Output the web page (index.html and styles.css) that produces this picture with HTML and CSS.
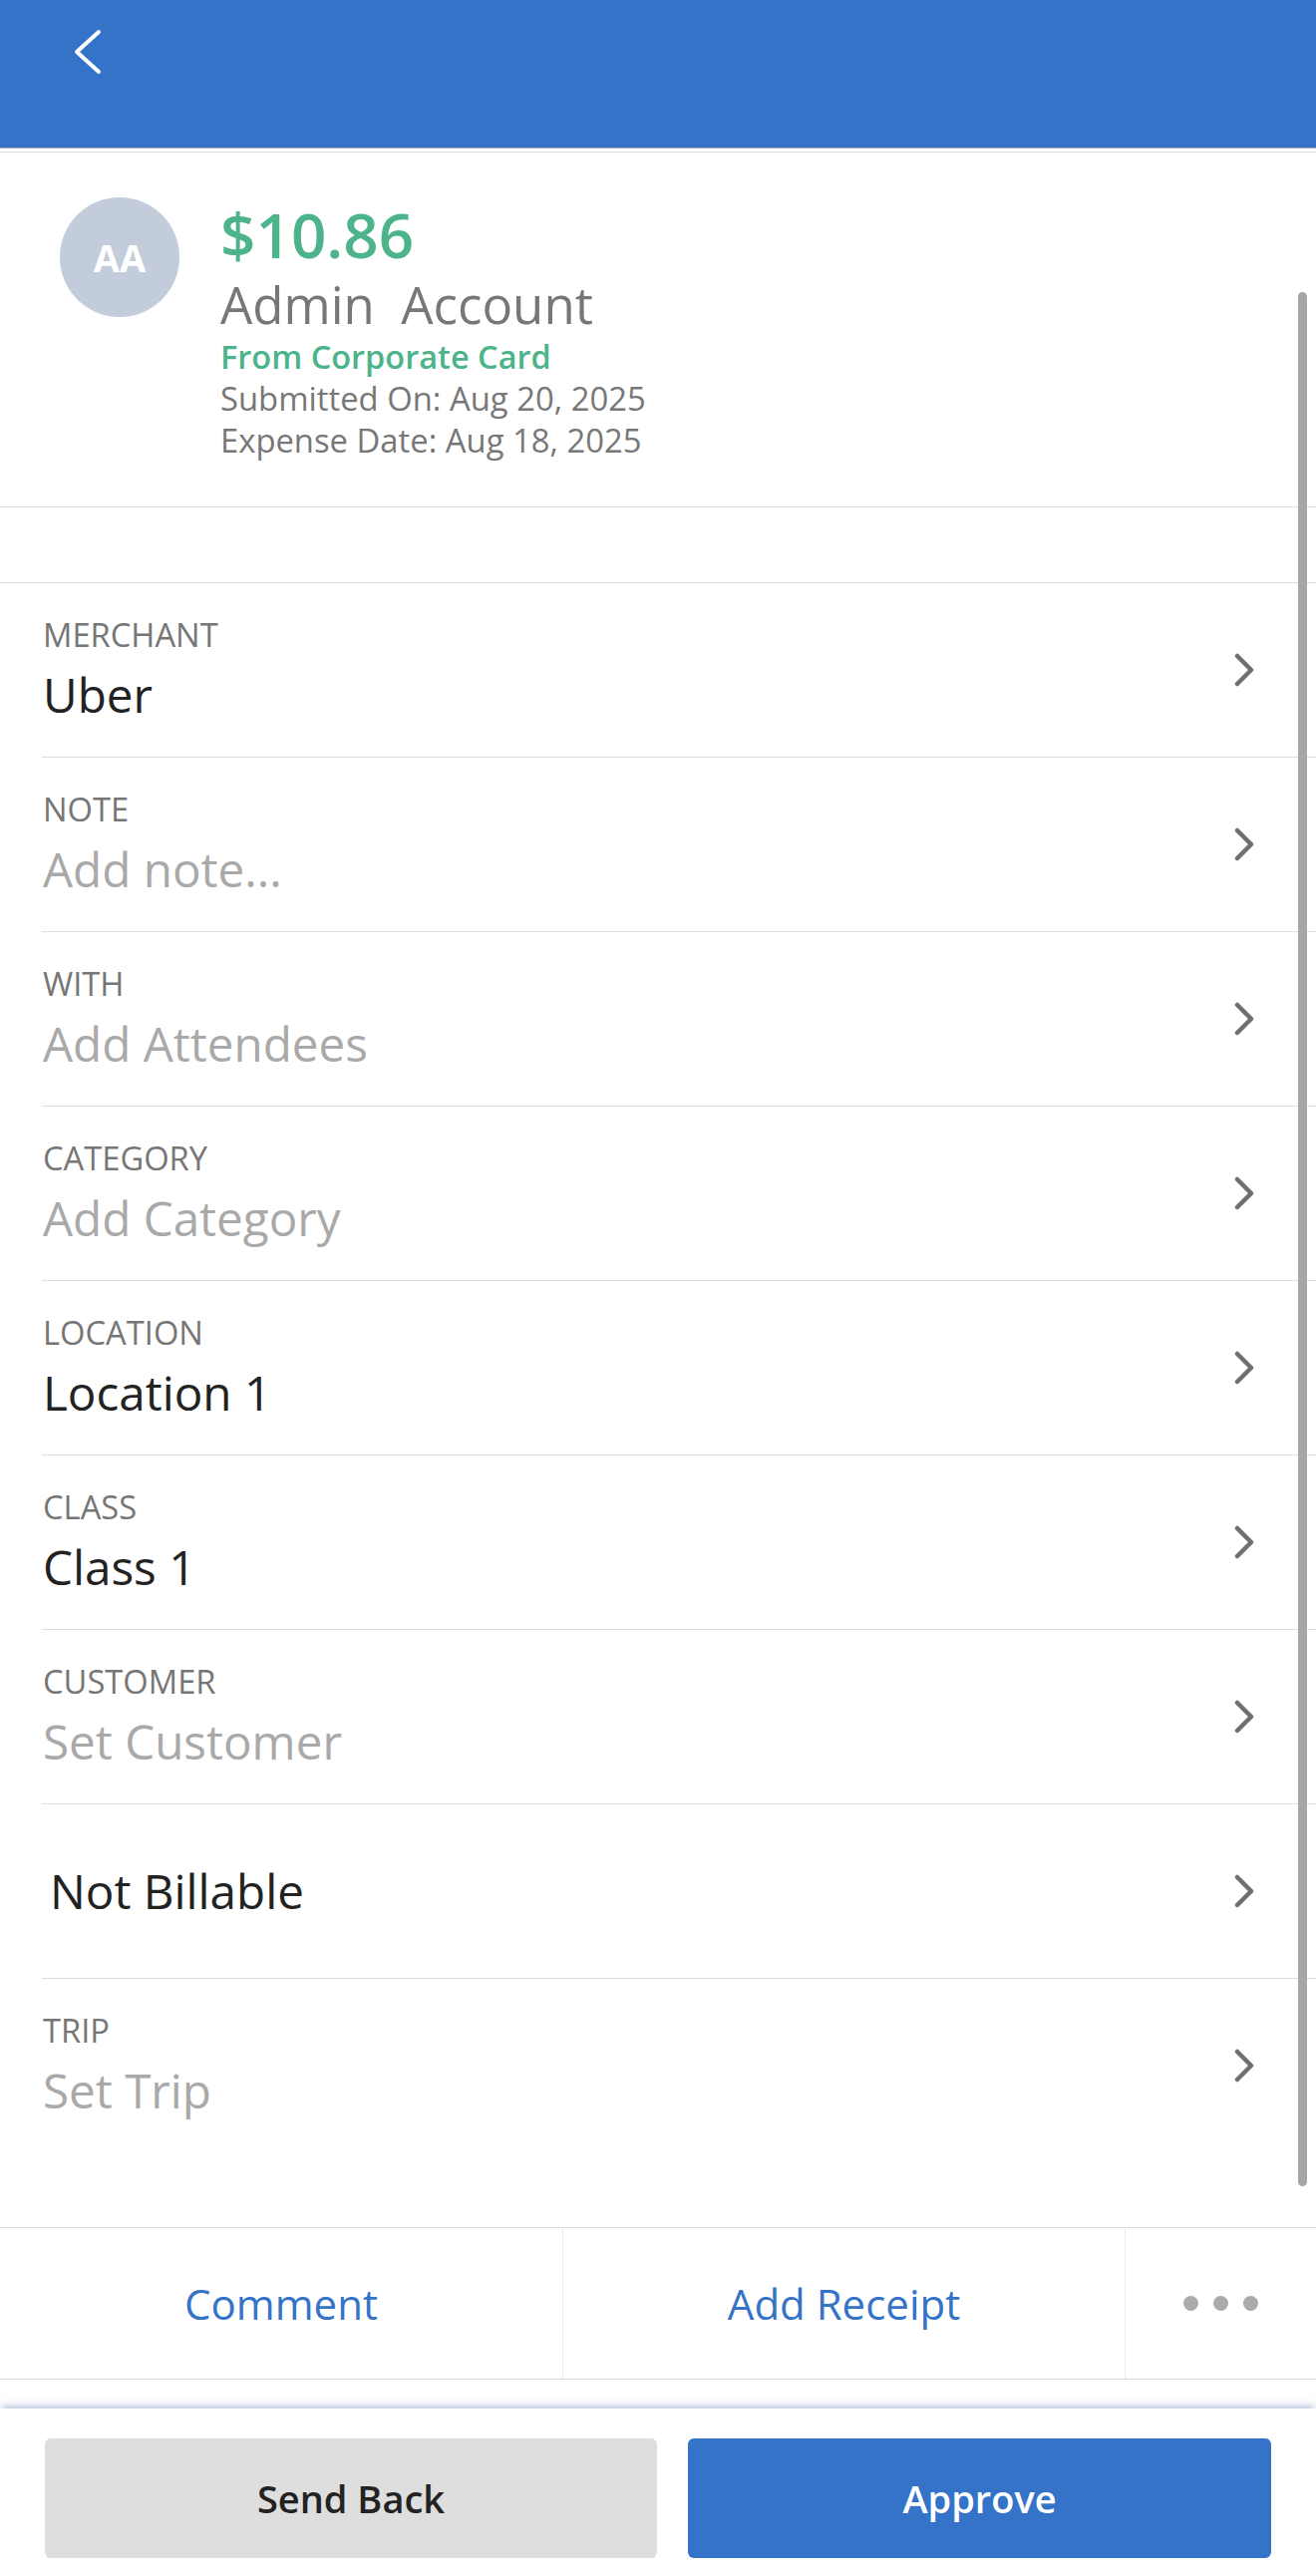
FILE: index.html
```html
<!DOCTYPE html>
<html lang="en">
<head>
    <meta charset="UTF-8">
    <meta name="viewport" content="width=device-width, initial-scale=1.0">
    <title>Expense Detail</title>
    <link rel="stylesheet" href="styles.css">
</head>
<body>
    <div class="header">
        <svg class="back" width="30" height="48" viewBox="0 0 30 48">
            <polyline points="26,4 4,24 26,44" fill="none" stroke="#fff" stroke-width="4" stroke-linecap="round" stroke-linejoin="round"/>
        </svg>
    </div>
    <div class="header-rule"></div>

    <div class="summary">
        <div class="avatar">AA</div>
        <div class="info">
            <div class="amount">$10.86</div>
            <div class="name">Admin&nbsp; Account</div>
            <div class="source">From Corporate Card</div>
            <div class="meta">Submitted On: Aug 20, 2025</div>
            <div class="meta">Expense Date: Aug 18, 2025</div>
        </div>
    </div>

    <div class="fields">
        <div class="field">
            <div class="field-text">
                <div class="label">MERCHANT</div>
                <div class="value">Uber</div>
            </div>
            <svg class="chev" width="22" height="34" viewBox="0 0 22 34"><polyline points="4,3 18,17 4,31"/></svg>
        </div>
        <div class="field">
            <div class="field-text">
                <div class="label">NOTE</div>
                <div class="value empty">Add note...</div>
            </div>
            <svg class="chev" width="22" height="34" viewBox="0 0 22 34"><polyline points="4,3 18,17 4,31"/></svg>
        </div>
        <div class="field">
            <div class="field-text">
                <div class="label">WITH</div>
                <div class="value empty">Add Attendees</div>
            </div>
            <svg class="chev" width="22" height="34" viewBox="0 0 22 34"><polyline points="4,3 18,17 4,31"/></svg>
        </div>
        <div class="field">
            <div class="field-text">
                <div class="label">CATEGORY</div>
                <div class="value empty">Add Category</div>
            </div>
            <svg class="chev" width="22" height="34" viewBox="0 0 22 34"><polyline points="4,3 18,17 4,31"/></svg>
        </div>
        <div class="field">
            <div class="field-text">
                <div class="label">LOCATION</div>
                <div class="value">Location 1</div>
            </div>
            <svg class="chev" width="22" height="34" viewBox="0 0 22 34"><polyline points="4,3 18,17 4,31"/></svg>
        </div>
        <div class="field">
            <div class="field-text">
                <div class="label">CLASS</div>
                <div class="value">Class 1</div>
            </div>
            <svg class="chev" width="22" height="34" viewBox="0 0 22 34"><polyline points="4,3 18,17 4,31"/></svg>
        </div>
        <div class="field">
            <div class="field-text">
                <div class="label">CUSTOMER</div>
                <div class="value empty">Set Customer</div>
            </div>
            <svg class="chev" width="22" height="34" viewBox="0 0 22 34"><polyline points="4,3 18,17 4,31"/></svg>
        </div>
        <div class="field">
            <div class="field-text billable">
                <div class="value">Not Billable</div>
            </div>
            <svg class="chev" width="22" height="34" viewBox="0 0 22 34"><polyline points="4,3 18,17 4,31"/></svg>
        </div>
        <div class="field last">
            <div class="field-text">
                <div class="label">TRIP</div>
                <div class="value empty">Set Trip</div>
            </div>
            <svg class="chev" width="22" height="34" viewBox="0 0 22 34"><polyline points="4,3 18,17 4,31"/></svg>
        </div>
    </div>

    <div class="actions">
        <div class="action">Comment</div>
        <div class="action">Add Receipt</div>
        <div class="action more">
            <span class="dot"></span><span class="dot"></span><span class="dot"></span>
        </div>
    </div>

    <div class="footer">
        <button class="btn secondary">Send Back</button>
        <button class="btn primary">Approve</button>
    </div>

    <!-- scroll indicator drawn over the list -->
    <div class="scrollbar"></div>
</body>
</html>
```

FILE: styles.css
```css
body {
    font-family: "Open Sans", "Noto Sans", sans-serif;
    margin: 0;
    padding: 0;
    width: 1320px;
    background: #fff;
    position: relative;
}
.header {
    background-color: #3473c8;
    height: 120px;
    padding: 28px 0 0 73px;
    border-bottom: 1px solid #b3b3b3;
}
.back {
    display: block;
}
.header-rule {
    height: 1px;
    margin-top: 3px;
    background: #dcdcdc;
}
.summary {
    display: flex;
    align-items: flex-start;
    padding: 44px 0 45px 60px;
    border-bottom: 1px solid #dcdcdc;
    height: 266px;
}
.avatar {
    width: 120px;
    height: 120px;
    margin-top: 1px;
    border-radius: 50%;
    background: #c2ccda;
    color: #fff;
    font-weight: 700;
    font-size: 38px;
    display: flex;
    align-items: center;
    justify-content: center;
    flex-shrink: 0;
}
.info {
    margin-left: 41px;
}
.amount {
    font-size: 62px;
    line-height: 76px;
    font-weight: 600;
    color: #4db38b;
}
.name {
    font-size: 51px;
    line-height: 64px;
    color: #777;
}
.source {
    font-size: 32.5px;
    line-height: 42px;
    font-weight: 600;
    color: #4db38b;
}
.meta {
    font-size: 32.8px;
    line-height: 42px;
    color: #777;
}
.fields {
    margin-top: 75px;
    border-top: 1px solid #dcdcdc;
}
.field {
    display: flex;
    align-items: center;
    justify-content: space-between;
    height: 174px;
    margin-left: 42px;
    padding: 0 61px 0 1px;
    border-bottom: 1px solid #dcdcdc;
}
.field.last {
    border-bottom: none;
}
.label {
    font-size: 32.7px;
    line-height: 40px;
    color: #767676;
}
.value {
    font-size: 47.6px;
    line-height: 60px;
    margin-top: 10px;
    color: #222;
}
.value.empty {
    color: #a9a9a9;
}
.billable {
    padding-left: 7px;
}
.billable .value {
    margin-top: 0;
}
.chev polyline {
    fill: none;
    stroke: #6f6f6f;
    stroke-width: 4.5;
    stroke-linecap: round;
    stroke-linejoin: round;
}
.actions {
    display: grid;
    grid-template-columns: 564px 564px 1fr;
    margin-top: 75px;
    height: 151px;
    border-top: 1px solid #dcdcdc;
    border-bottom: 1px solid #dcdcdc;
}
.action {
    display: flex;
    align-items: center;
    justify-content: center;
    font-size: 42px;
    color: #3473c8;
}
.action + .action {
    border-left: 1px solid #ebebeb;
}
.more {
    gap: 15px;
}
.dot {
    width: 15px;
    height: 15px;
    border-radius: 50%;
    background: #ababab;
}
.footer {
    display: grid;
    grid-template-columns: 614fr 585fr;
    gap: 31px;
    margin-top: 29px;
    height: 168px;
    padding: 30px 45px 0;
    box-sizing: border-box;
    box-shadow: 0 -5px 7px -2px rgba(60, 95, 160, 0.35);
    position: relative;
    background: #fff;
}
.btn {
    height: 120px;
    border: none;
    border-radius: 6px;
    font-family: "Open Sans", sans-serif;
    font-size: 38px;
    font-weight: 600;
}
.btn.secondary {
    background: #dedede;
    color: #222;
}
.btn.primary {
    background: #3473c8;
    color: #fff;
}
.scrollbar {
    position: absolute;
    left: 1302px;
    top: 293px;
    width: 9px;
    height: 1900px;
    border-radius: 5px;
    background: #a6a6a6;
}
```
